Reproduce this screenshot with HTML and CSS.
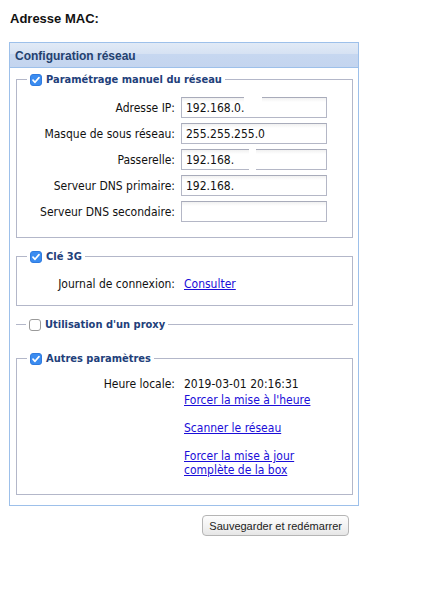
FILE: index.html
```html
<!DOCTYPE html>
<html lang="fr">
<head>
  <meta charset="UTF-8" />
  <title>Configuration réseau</title>
  <link rel="stylesheet" href="styles.css">
</head>
<body>
  <h1 class="mac-title">Adresse MAC:</h1>

  <div class="panel">
    <div class="panel-head">Configuration réseau</div>
    <div class="panel-body">

      <fieldset class="group">
        <legend><span class="check on"></span>Paramétrage manuel du réseau</legend>
        <div class="form-grid">
          <label for="ip">Adresse IP:</label>
          <div class="field"><input id="ip" type="text" value="192.168.0." /><span class="mask mask-ip"></span></div>
          <label for="mask">Masque de sous réseau:</label>
          <div class="field"><input id="mask" type="text" value="255.255.255.0" /></div>
          <label for="gw">Passerelle:</label>
          <div class="field"><input id="gw" type="text" value="192.168." /><span class="mask mask-gw"></span></div>
          <label for="dns1">Serveur DNS primaire:</label>
          <div class="field"><input id="dns1" type="text" value="192.168." /></div>
          <label for="dns2">Serveur DNS secondaire:</label>
          <div class="field"><input id="dns2" type="text" value="" /></div>
        </div>
      </fieldset>

      <fieldset class="group g3g">
        <legend><span class="check on"></span>Clé 3G</legend>
        <div class="form-grid info">
          <span class="lbl">Journal de connexion:</span>
          <span><a href="#">Consulter</a></span>
        </div>
      </fieldset>

      <fieldset class="group collapsed">
        <legend><span class="check"></span>Utilisation d'un proxy</legend>
      </fieldset>

      <fieldset class="group gother">
        <legend><span class="check on"></span>Autres paramètres</legend>
        <div class="form-grid info other">
          <span class="lbl">Heure locale:</span>
          <div class="links">
            <div class="clock">2019-03-01 20:16:31</div>
            <a href="#">Forcer la mise à l'heure</a><br><br>
            <a href="#">Scanner le réseau</a><br><br>
            <a href="#">Forcer la mise à jour<br>complète de la box</a>
          </div>
        </div>
      </fieldset>

    </div>
  </div>

  <div class="actions">
    <button type="button">Sauvegarder et redémarrer</button>
  </div>
</body>
</html>
```

FILE: styles.css
```css
* { box-sizing: border-box; }
body {
  margin: 0; padding: 12px 0 0 9px;
  font-family: 'DejaVu Sans Condensed', 'DejaVu Sans', sans-serif; font-size: 12px; color: #111;
  background: #fff;
}
.mac-title {
  margin: 0 0 17px 1px; font-family: 'Liberation Sans', Arial, sans-serif;
  font-size: 13px; font-weight: 700; line-height: 13px; color: #111;
}
.panel { width: 350px; border: 1px solid #9dc0ea; }
.panel-head {
  height: 25px; padding: 6px 0 0 5px;
  font-family: 'Liberation Sans', Arial, sans-serif; font-size: 12px; font-weight: 700; color: #24416e;
  background: linear-gradient(#e1eaf6, #d6e2f3 45%, #c6d7f0 46%, #c4d5ef);
  border-bottom: 1px solid #9dc0ea;
}
.panel-body { padding: 4px 5px 10px 6px; }

.group {
  margin: 0 0 11px; padding: 10px 0 15px; min-width: 0;
  border: 1px solid #b3b7c9;
}
.group:last-child { margin-bottom: 0; }
.group legend {
  display: flex; align-items: center; gap: 4px;
  margin-left: 10px; padding: 0 3px;
  font-size: 11px; font-weight: 700; color: #22407a; line-height: 15px;
}
.group.collapsed { border-width: 1px 0 0; padding: 0; margin-bottom: 19px; }

.check {
  width: 12px; height: 12px; border-radius: 3px; border: 1px solid #9a9a9a; background: #fff;
  flex: none;
}
.check.on {
  border-color: #2f7be0;
  background: #3b8cf0 url("data:image/svg+xml;utf8,<svg xmlns='http://www.w3.org/2000/svg' viewBox='0 0 12 12'><path d='M3 6.2 5 8.3 9 3.6' fill='none' stroke='white' stroke-width='1.7' stroke-linecap='round' stroke-linejoin='round'/></svg>") center/12px no-repeat;
}

.form-grid {
  display: grid; grid-template-columns: 158px 146px; column-gap: 6px; row-gap: 5px;
  align-items: center;
}
.form-grid label, .form-grid .lbl { text-align: right; }
.field { position: relative; }
.field input {
  display: block; width: 146px; height: 21px; padding: 1px 4px 0;
  font: 12px 'DejaVu Sans Condensed', 'DejaVu Sans', sans-serif; color: #111;
  border: 1px solid #b4b7c6; border-top-color: #a8abba; background: linear-gradient(#f1f1f1, #fff 4px);
}
.mask { position: absolute; background: #fff; }
.mask-ip { left: 63px; top: -1px; width: 18px; height: 19px; }
.mask-gw { left: 68px; top: -2px; width: 7px; height: 34px; }

.info { column-gap: 9px; line-height: 14px; }
.g3g { padding-top: 13px; padding-bottom: 14px; }
.other { align-items: start; }
.gother { padding-top: 11px; padding-bottom: 17px; }
.clock { margin-bottom: 2px; }
a { color: #1a0dd8; }

.actions { width: 340px; display: flex; justify-content: flex-end; margin-top: 9px; }
button {
  height: 21px; padding: 0 6px;
  font: 11px 'Liberation Sans', Arial, sans-serif; color: #222;
  border: 1px solid #b5b5b5; border-radius: 4px;
  background: linear-gradient(#fdfdfd, #f1f1f1 60%, #e6e6e6);
}
```
